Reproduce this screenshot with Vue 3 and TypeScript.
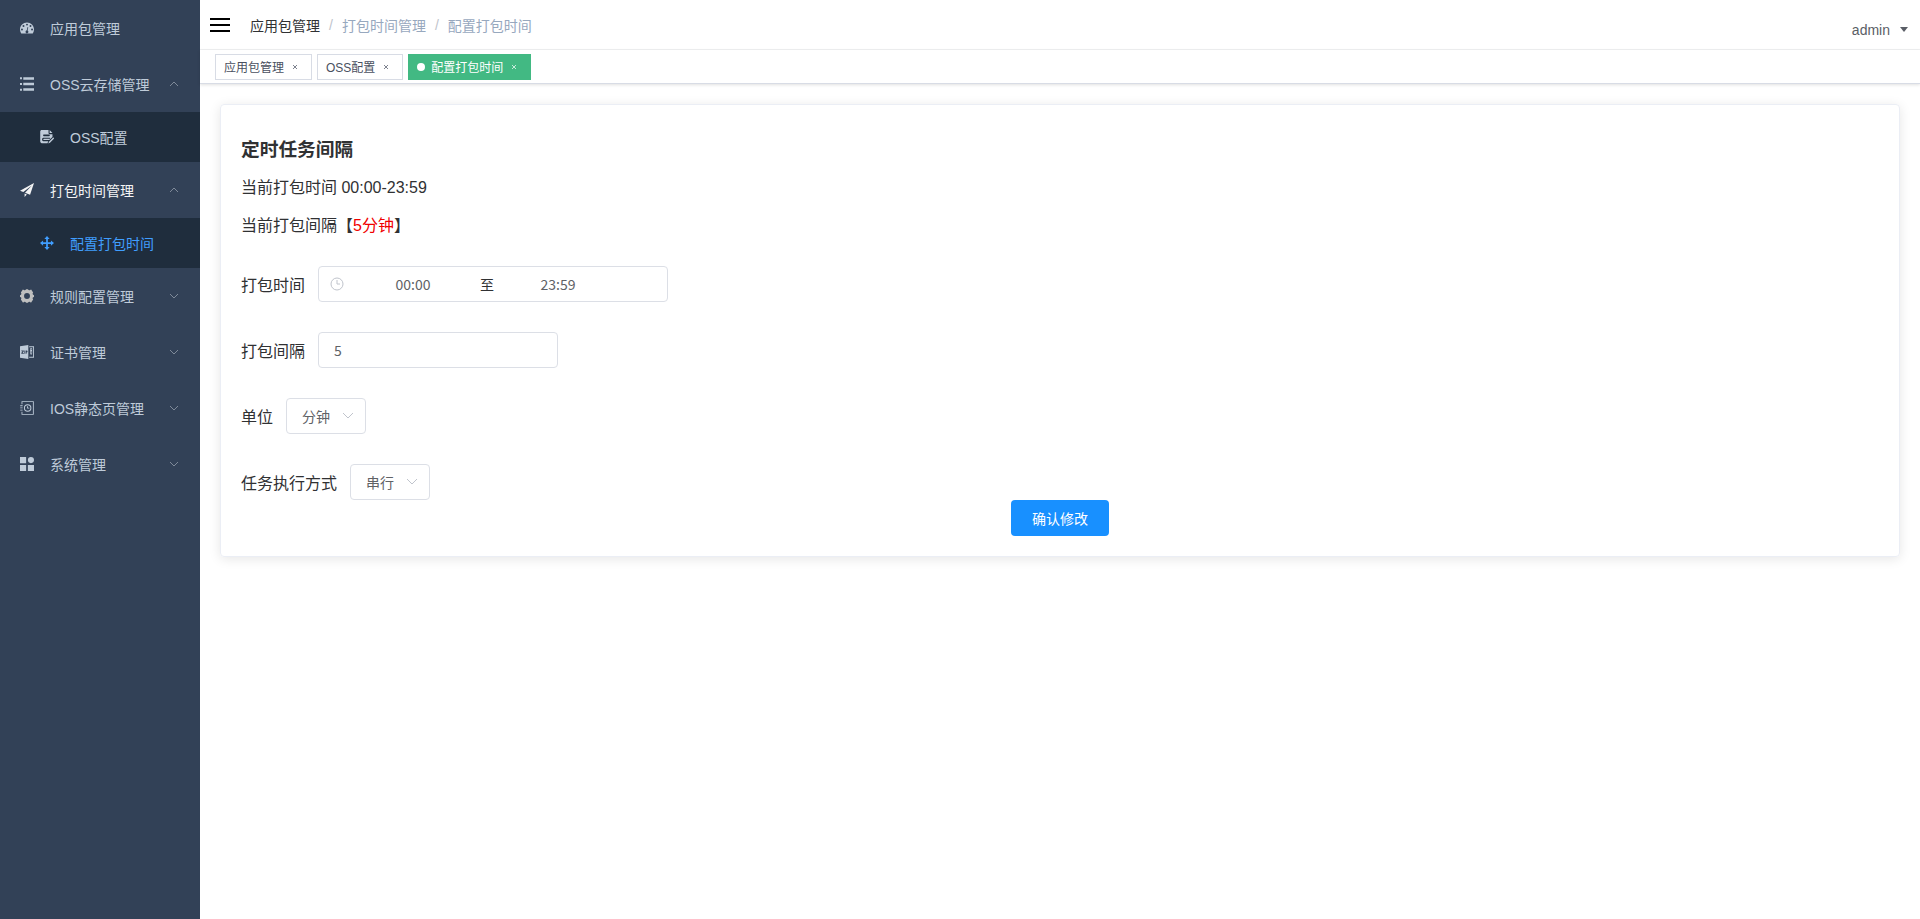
<script setup lang="ts">
import { ref } from 'vue'

interface MenuChild {
  title: string
  icon: string
  active?: boolean
}

interface MenuItem {
  title: string
  icon: string
  open?: boolean
  active?: boolean
  children?: MenuChild[]
}

const menu = ref<MenuItem[]>([
  { title: '应用包管理', icon: 'dashboard' },
  { title: 'OSS云存储管理', icon: 'list', open: true, children: [{ title: 'OSS配置', icon: 'form' }] },
  {
    title: '打包时间管理',
    icon: 'plane',
    open: true,
    active: true,
    children: [{ title: '配置打包时间', icon: 'drag', active: true }],
  },
  { title: '规则配置管理', icon: 'gear', children: [] },
  { title: '证书管理', icon: 'zip', children: [] },
  { title: 'IOS静态页管理', icon: 'guide', children: [] },
  { title: '系统管理', icon: 'component', children: [] },
])

const icons: Record<string, string> = {
  dashboard:
    'M64 14C29 14 0 42 0 78c0 12 4 24 10 34 1 2 3 2 5 2h98c2 0 4 0 5-2 6-10 10-22 10-34 0-36-29-64-64-64ZM18 87a9 9 0 1 1 0-18 9 9 0 0 1 0 18Zm14-32a9 9 0 1 1 0-18 9 9 0 0 1 0 18Zm32-31a9 9 0 1 1 0 18 9 9 0 0 1 0-18Zm11 37-6 25c6 3 9 9 7 16-2 6-9 10-16 9-7-2-11-9-9-16 1-5 5-9 11-10l6-26c1-5 8-4 7 2Zm21-6a9 9 0 1 1 0-18 9 9 0 0 1 0 18Zm14 32a9 9 0 1 1 0-18 9 9 0 0 1 0 18Z',
  list:
    'M0 3h18v18H0Zm30 0h98v22H30ZM0 55h18v18H0Zm30-2h98v22H30ZM0 107h18v18H0Zm30-4h98v22H30Z',
  form:
    'M16 0h62v28c0 6 4 10 10 10h26v26L84 92H36c-8 0-8-12 0-12h56V70H30c-14 0-14 32 0 32h46l-8 18H16C8 120 2 114 2 106V14C2 6 8 0 16 0Zm72 0 26 28H88ZM34 42c-8 0-8 14 0 14h50c8 0 8-14 0-14Zm84 28c4-4 13 4 9 9l-36 38-15 6 6-16Z',
  plane: 'M128 0 0 70l30 13L108 22 46 90l46 18ZM42 96v32l20-24Z',
  drag:
    'M64 0 88 28H72v28h28V40l28 24-28 24V72H72v28h16l-24 28-24-28h16V72H28v16L0 64l28-24v16h28V28H40Z',
  gear:
    'M36 8c8 5 14 2 20-6h16c6 8 12 11 20 6l10-4 18 28c-6 10-6 14 0 20l8 4v16l-8 4c-6 6-6 10 0 20l-18 28-10-4c-8-5-14-2-20 6H56c-6-8-12-11-20-6l-10 4L8 96c6-10 6-14 0-20l-8-4V56l8-4c6-6 6-10 0-20L26 4Zm28 29a27 27 0 1 0 0 54 27 27 0 0 0 0-54Z',
  zip:
    'M0 12 76 0v128L0 116Zm12 38v7h11L12 73v7h23v-7H24l11-16v-7Zm28 0v30h8V50Zm13 0v30h7V69c12 0 13-19 0-19Zm31-38h44v104H84v-8h36V20H84Zm9 18h18v46c0 16-18 16-18 0Zm6 6v10h6V36Zm0 22v20h6V58Z',
  guide:
    'M14 2h112v124H14V98h8v20h96V10H22v20h-8ZM2 39h22v8H2Zm0 20h22v8H2Zm0 20h22v8H2Zm68-49a34 34 0 1 1 0 68 34 34 0 0 1 0-68Zm0 9a25 25 0 1 0 0 50 25 25 0 0 0 0-50Zm-5 10h8v12h12v8H65Z',
  component:
    'M0 0h56v56H0Zm0 72h56v56H0Zm72 0h56v56H72Zm28-72a28 28 0 1 1 0 56 28 28 0 0 1 0-56Z',
}

const tags = ref([
  { title: '应用包管理', active: false },
  { title: 'OSS配置', active: false },
  { title: '配置打包时间', active: true },
])

const startTime = ref('00:00')
const endTime = ref('23:59')
const interval = ref('5')
const unit = ref('分钟')
const mode = ref('串行')

function toggle(item: MenuItem) {
  item.open = !item.open
}

function closeTag(index: number) {
  tags.value.splice(index, 1)
}
</script>

<template>
  <div class="layout">
    <aside class="sidebar">
      <nav>
        <ul>
          <li v-for="item in menu" :key="item.title">
            <a v-if="!item.children" class="menu-row" href="#">
              <svg class="menu-icon" viewBox="0 0 128 128" fill-rule="evenodd"><path :d="icons[item.icon]" /></svg>
              <span>{{ item.title }}</span>
            </a>
            <button
              v-else
              type="button"
              class="menu-row"
              :class="{ current: item.active }"
              :aria-expanded="!!item.open"
              @click="toggle(item)"
            >
              <svg class="menu-icon" :class="item.icon" viewBox="0 0 128 128" fill-rule="evenodd">
                <path :d="icons[item.icon]" />
              </svg>
              <span>{{ item.title }}</span>
              <svg class="arrow" :class="{ up: item.open }" viewBox="0 0 12 12"><path d="m2 4 4 4 4-4" /></svg>
            </button>
            <ul v-if="item.open && item.children" class="submenu">
              <li v-for="child in item.children" :key="child.title">
                <a class="sub-row" :class="{ active: child.active }" href="#">
                  <svg class="menu-icon" viewBox="0 0 128 128" fill-rule="evenodd"><path :d="icons[child.icon]" /></svg>
                  <span>{{ child.title }}</span>
                </a>
              </li>
            </ul>
          </li>
        </ul>
      </nav>
    </aside>

    <div class="main">
      <header class="navbar">
        <button type="button" class="hamburger" aria-label="折叠菜单">
          <svg viewBox="0 0 20 14"><path d="M0 0h20v2H0Zm0 6h20v2H0Zm0 6h20v2H0Z" /></svg>
        </button>
        <nav class="breadcrumb">
          <a href="#">应用包管理</a>
          <span class="slash">/</span>
          <span>打包时间管理</span>
          <span class="slash">/</span>
          <span>配置打包时间</span>
        </nav>
        <button type="button" class="user">
          admin
          <svg viewBox="0 0 8 5"><path d="M0 0h8L4 5Z" /></svg>
        </button>
      </header>

      <div class="tags">
        <div v-for="(tag, i) in tags" :key="tag.title" class="tag" :class="{ active: tag.active }">
          <a href="#">{{ tag.title }}</a>
          <button type="button" aria-label="关闭" @click="closeTag(i)">
            <svg viewBox="0 0 6 6"><path d="m1 1 4 4m0-4L1 5" /></svg>
          </button>
        </div>
      </div>

      <main>
        <form class="card" @submit.prevent>
          <h3>定时任务间隔</h3>
          <p>当前打包时间 00:00-23:59</p>
          <p>当前打包间隔【<span class="red">5分钟</span>】</p>

          <div class="row first">
            <label for="start">打包时间</label>
            <div class="range">
              <svg class="clock" viewBox="0 0 14 14"><circle cx="7" cy="7" r="6" /><path d="M7 3v4h3" /></svg>
              <input id="start" v-model="startTime" type="text" />
              <span>至</span>
              <input v-model="endTime" type="text" aria-label="结束时间" />
            </div>
          </div>
          <div class="row">
            <label for="interval">打包间隔</label>
            <input id="interval" v-model="interval" class="text" type="text" />
          </div>
          <div class="row">
            <label for="unit">单位</label>
            <div class="select">
              <select id="unit" v-model="unit">
                <option>分钟</option>
                <option>小时</option>
              </select>
              <svg viewBox="0 0 12 12"><path d="m1 3 5 5 5-5" /></svg>
            </div>
          </div>
          <div class="row">
            <label for="mode">任务执行方式</label>
            <div class="select">
              <select id="mode" v-model="mode">
                <option>串行</option>
                <option>并行</option>
              </select>
              <svg viewBox="0 0 12 12"><path d="m1 3 5 5 5-5" /></svg>
            </div>
          </div>
          <button class="submit" type="submit">确认修改</button>
        </form>
      </main>
    </div>
  </div>
</template>

<style>
body {
  margin: 0;
  background: #fff;
}
</style>

<style scoped>
* {
  box-sizing: border-box;
}
.layout {
  display: flex;
  min-height: 100vh;
  font-family: 'Liberation Sans', 'Noto Sans CJK SC', sans-serif;
  font-size: 14px;
  color: #303133;
}
button,
input,
select {
  font: inherit;
  color: inherit;
  margin: 0;
  outline: none;
}
button {
  border: 0;
  padding: 0;
  background: none;
  cursor: pointer;
}
a {
  color: inherit;
  text-decoration: none;
}
ul {
  margin: 0;
  padding: 0;
  list-style: none;
}
svg {
  display: block;
  flex: none;
}

.sidebar {
  width: 200px;
  flex: none;
  background: #324157;
  color: #bfcbd9;
}
.menu-row,
.sub-row {
  display: flex;
  align-items: center;
  width: 100%;
  height: 56px;
  padding: 0 20px;
  text-align: left;
}
.menu-row.current {
  color: #f4f4f5;
}
.sub-row {
  height: 50px;
  padding-left: 40px;
  background: #1f2d3d;
}
.sub-row.active {
  color: #409eff;
}
.menu-icon {
  width: 14px;
  height: 14px;
  margin-right: 16px;
  fill: currentColor;
}
.menu-icon.gear {
  fill: #bfbfbf;
}
.arrow {
  width: 12px;
  height: 12px;
  margin-left: auto;
  fill: none;
  stroke: #7f8a99;
  stroke-width: 1;
}
.arrow.up {
  transform: rotate(180deg);
}

.main {
  flex: 1;
  min-width: 0;
}
.navbar {
  display: flex;
  align-items: center;
  height: 50px;
  padding: 0 12px 0 10px;
  border-bottom: 1px solid #f0f1f2;
}
.hamburger svg {
  width: 20px;
  height: 14px;
  fill: #000;
}
.breadcrumb {
  display: flex;
  align-items: center;
  margin-left: 20px;
  color: #97a8be;
}
.breadcrumb a {
  color: #303133;
}
.slash {
  margin: 0 9px;
  color: #c0c4cc;
}
.user {
  display: flex;
  align-items: center;
  gap: 10px;
  margin-left: auto;
  padding-top: 10px;
  color: #5a5e66;
}
.user svg {
  width: 8px;
  height: 5px;
  fill: currentColor;
}

.tags {
  display: flex;
  align-items: center;
  gap: 5px;
  height: 34px;
  padding: 0 15px;
  border-bottom: 1px solid #d8dce5;
  box-shadow: 0 1px 3px 0 rgba(0, 0, 0, 0.12);
}
.tag {
  display: flex;
  align-items: center;
  height: 26px;
  padding: 0 8px;
  border: 1px solid #d8dce5;
  font-size: 12px;
  color: #495060;
}
.tag button {
  display: flex;
  align-items: center;
  justify-content: center;
  width: 16px;
  height: 16px;
  margin-left: 3px;
}
.tag button svg {
  width: 6px;
  height: 6px;
  fill: none;
  stroke: currentColor;
  stroke-width: 1;
  opacity: 0.7;
}
.tag.active {
  border-color: #42b983;
  background: #42b983;
  color: #fff;
}
.tag.active::before {
  content: '';
  width: 8px;
  height: 8px;
  margin-right: 6px;
  border-radius: 50%;
  background: #fff;
}

main {
  padding: 20px;
}
.card {
  display: flex;
  flex-direction: column;
  padding: 20px;
  border: 1px solid #ebeef5;
  border-radius: 4px;
  box-shadow: 0 2px 12px 0 rgba(0, 0, 0, 0.1);
  font-size: 16px;
}
h3 {
  margin: 13px 0 14px;
  line-height: 24px;
}
p {
  margin: 0 0 14px;
  line-height: 24px;
}
.red {
  color: #f00000;
}
.row {
  display: flex;
  align-items: center;
  gap: 13px;
  margin-bottom: 30px;
}
.row.first {
  margin-top: 14px;
}
.row:last-of-type {
  margin-bottom: 0;
}
.range,
.text,
.select select {
  height: 36px;
  border: 1px solid #dcdfe6;
  border-radius: 4px;
  background: #fff;
  font-family: 'Noto Sans CJK SC', sans-serif;
  font-size: 14px;
  color: #606266;
}
.range {
  display: flex;
  align-items: center;
  width: 350px;
  padding: 0 10px;
}
.range input {
  width: 128px;
  padding: 0;
  border: 0;
  background: none;
  text-align: center;
}
.range span {
  width: 17px;
  text-align: right;
  color: #303133;
}
.clock {
  width: 14px;
  height: 14px;
  margin: 0 5px 0 1px;
  fill: none;
  stroke: #c0c4cc;
}
.text {
  width: 240px;
  padding: 0 15px;
}
.select {
  position: relative;
}
.select select {
  display: block;
  width: 80px;
  padding: 0 15px;
  appearance: none;
}
.select svg {
  position: absolute;
  top: 12px;
  right: 12px;
  width: 12px;
  height: 12px;
  fill: none;
  stroke: #c0c4cc;
  pointer-events: none;
}
.submit {
  align-self: center;
  width: 98px;
  height: 36px;
  border-radius: 4px;
  background: #1890ff;
  font-size: 14px;
  color: #fff;
}
</style>
